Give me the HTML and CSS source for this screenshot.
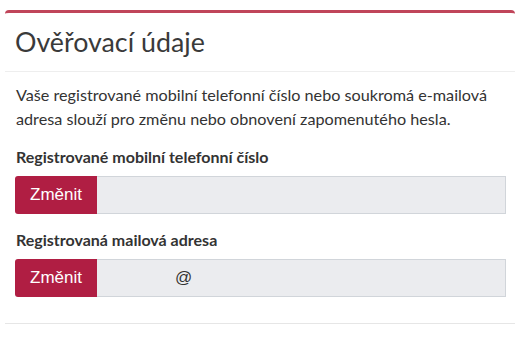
FILE: index.html
```html
<!DOCTYPE html>
<html lang="cs">
<head>
<meta charset="utf-8">
<title>Ověřovací údaje</title>
<link rel="stylesheet" href="styles.css">
</head>
<body>
<div class="page">
  <section class="card">
    <header class="card-header">
      <h2 class="card-title">Ověřovací údaje</h2>
    </header>
    <div class="card-body">
      <p class="intro">Vaše registrované mobilní telefonní číslo nebo soukromá e-mailová adresa slouží pro změnu nebo obnovení zapomenutého hesla.</p>
      <div class="field">
        <div class="field-label">Registrované mobilní telefonní číslo</div>
        <div class="input-group">
          <button class="btn-change" type="button">Změnit</button>
          <div class="input-value"></div>
        </div>
      </div>
      <div class="field">
        <div class="field-label">Registrovaná mailová adresa</div>
        <div class="input-group">
          <button class="btn-change" type="button">Změnit</button>
          <div class="input-value email">@</div>
        </div>
      </div>
    </div>
  </section>
</div>
</body>
</html>
```

FILE: styles.css
```css
html, body {
  margin: 0;
  padding: 0;
  background: #ffffff;
}
body {
  font-family: "Lato", "Open Sans", "Liberation Sans", sans-serif;
  color: #333333;
}
.page {
  padding: 10px 16px 0 5px;
}
.card {
  border-top: 3px solid #c0455a;
  border-radius: 4px 4px 0 0;
  border-bottom: 1px solid #e6e6e6;
}
.card-header {
  border-bottom: 1px solid #eeeeee;
  padding: 12px 10px 11px 10px;
}
.card-title {
  margin: 0;
  font-weight: 400;
  font-size: 26.8px;
  line-height: 35px;
  color: #3a3a3a;
}
.card-body {
  padding: 11px 10px 26px 10px;
}
.intro {
  margin: 0 0 14px 1px;
  font-size: 16.2px;
  line-height: 24px;
  color: #333333;
}
.field {
  margin-top: 8px;
}
.field + .field {
  margin-top: 14px;
}
.field-label {
  font-weight: 700;
  font-size: 16px;
  line-height: 24px;
  margin: 0 0 7px 1px;
  color: #333333;
}
.input-group {
  display: flex;
  height: 38px;
  width: 491px;
}
.btn-change {
  flex: 0 0 82px;
  border: none;
  background: #b01e43;
  color: #ffffff;
  font-family: "Liberation Sans", Arial, sans-serif;
  font-size: 17px;
  border-radius: 3px 0 0 3px;
  padding: 0;
  margin: 0;
}
.input-value {
  flex: 1;
  background: #ebecef;
  border: 1px solid #d1d5da;
  border-left: none;
  font-family: "Liberation Sans", Arial, sans-serif;
  font-size: 17px;
  color: #333333;
  display: flex;
  align-items: center;
  padding-left: 78px;
}
```
